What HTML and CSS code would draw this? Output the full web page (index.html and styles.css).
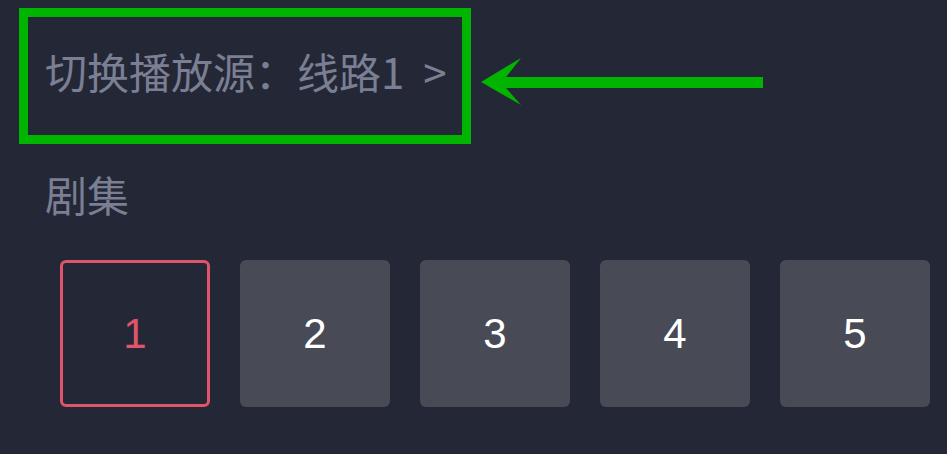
FILE: index.html
```html
<!DOCTYPE html>
<html lang="zh">
<head>
<meta charset="utf-8">
<link rel="stylesheet" href="styles.css">
</head>
<body>
<div class="page">
  <div class="source-row">
    <div class="source-box">
      <span class="source-text">切换播放源：线路1&nbsp;&nbsp;&gt;</span>
    </div>
    <svg class="arrow" width="290" height="50" viewBox="0 0 290 50">
      <polygon fill="#00b400" points="0,24 40,0 25,19 282,19 282,30 25,30 40,47"/>
    </svg>
  </div>
  <div class="section-title">剧集</div>
  <div class="episodes">
    <div class="ep active">1</div>
    <div class="ep">2</div>
    <div class="ep">3</div>
    <div class="ep">4</div>
    <div class="ep">5</div>
  </div>
</div>
</body>
</html>
```

FILE: styles.css
```css
html, body {
  margin: 0;
  padding: 0;
  background: #242836;
  overflow: hidden;
}
.page {
  width: 947px;
  height: 454px;
  overflow: hidden;
  font-family: "Noto Sans CJK SC", "Noto Sans", sans-serif;
}
.source-row {
  display: flex;
  align-items: center;
  padding: 8px 0 0 19px;
}
.source-box {
  box-sizing: border-box;
  width: 452px;
  height: 136px;
  border: 9px solid #00b400;
  display: flex;
  align-items: center;
  padding: 0 0 10px 17px;
}
.source-text {
  font-size: 42px;
  line-height: 42px;
  color: #7a7f93;
  white-space: nowrap;
}
.arrow {
  display: block;
  margin-left: 10px;
  margin-top: 13px;
}
.section-title {
  margin: 22px 0 0 45px;
  font-size: 42px;
  line-height: 56px;
  color: #7a7f93;
  height: 56px;
}
.episodes {
  display: flex;
  gap: 30px;
  padding-left: 60px;
  margin-top: 38px;
}
.ep {
  flex: 0 0 150px;
  height: 147px;
  box-sizing: border-box;
  border-radius: 6px;
  background: #484b56;
  color: #ffffff;
  font-family: "Liberation Sans", Arial, sans-serif;
  font-size: 42px;
  display: flex;
  align-items: center;
  justify-content: center;
}
.ep.active {
  background: transparent;
  border: 3px solid #e2546a;
  color: #e2546a;
}
```
